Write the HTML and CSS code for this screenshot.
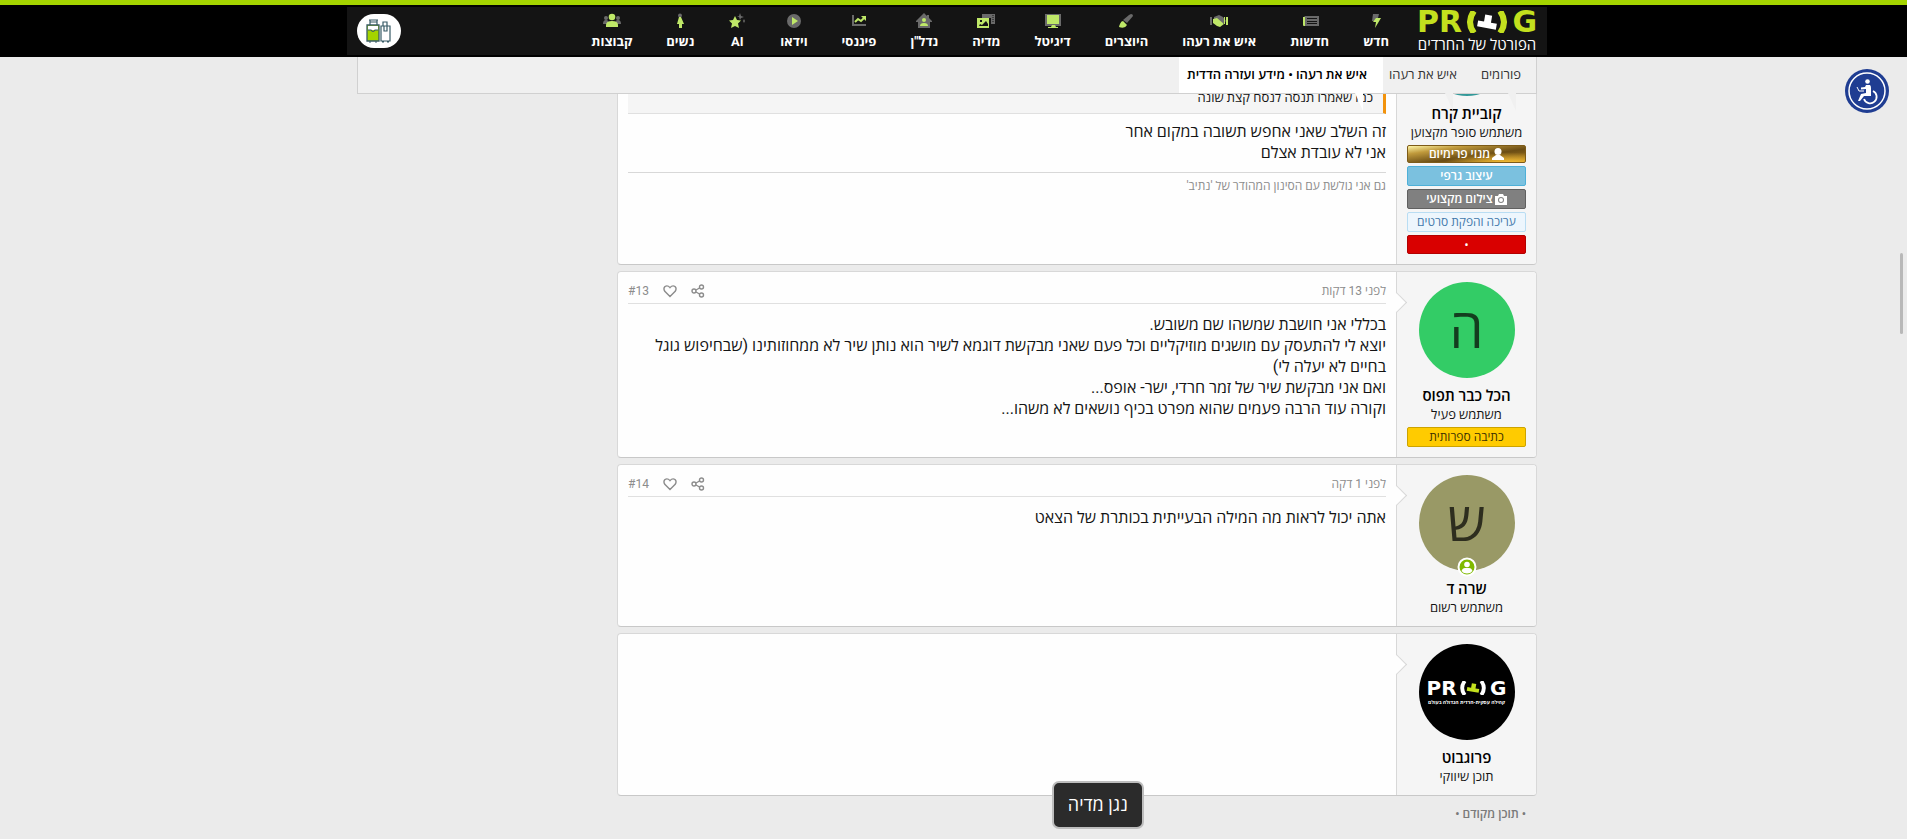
FILE: index.html
```html
<!DOCTYPE html>
<html lang="he" dir="rtl">
<head>
<meta charset="utf-8">
<title>איש את רעהו • מידע ועזרה הדדית</title>
<link rel="stylesheet" href="styles.css">
</head>
<body>
<header class="site-header">
  <div class="header-inner">
    <a class="logo" href="#">
      <span class="logo-word" dir="ltr">
        <span>PR</span>
        <svg class="logo-mark" viewBox="0 0 44 22"><g fill="none" stroke="#c3e01e" stroke-width="6"><path d="M9 0Q1 11 9 22M35 0Q43 11 35 22"/></g><path fill="#fff" transform="rotate(10 22 11)" d="M19 4h7v6h-7zM13 11h6v-1h7v1h6v6H13z"/></svg>
        <span>G</span>
      </span>
      <span class="logo-sub">הפורטל של החרדים</span>
    </a>
    <nav class="main-nav">
      <a href="#"><svg viewBox="0 0 18 16"><path class="g" d="M6 1h6l-1 4-2 3H5z"/><path class="l" d="M9 5h5L8 15l1-6H6z"/></svg>חדש</a>
      <a href="#"><svg viewBox="0 0 18 16"><path class="g" d="M4 3h14v10H3V4z"/><path class="l" d="M2 4h2v9H3q-1 0-1-1z"/><path stroke="#141414" d="M6 5.500h10M6 8.500h10M6 10.500h10"/></svg>חדשות</a>
      <a href="#"><svg viewBox="0 0 18 16"><path class="g" d="M0 4h2v8H0zM4 4l5-2 4 2 3 4-3 3-6-5-3 2z"/><path class="l" d="M3 6l4-1 7 6-4 3-3-1-4-3zM14 4h1v7h-1zM16 4h2v8h-2z"/></svg>איש את רעהו</a>
      <a href="#"><svg viewBox="0 0 18 16"><path class="g" d="M14 1q2 0 2 2l-6 7-4-3 6-5z"/><path class="l" d="M6 8l4 4q-2 4-8 2 0-1 1-3 1-3 3-3z"/></svg>היוצרים</a>
      <a href="#"><svg viewBox="0 0 18 16"><path class="g" d="M1 1h16v12H1z"/><path class="l" d="M3 2h12v9H3zM8 12h3l1 2h2v1H4v-1h3z"/></svg>דיגיטל</a>
      <a href="#"><svg viewBox="0 0 18 16"><path class="g" d="M5 1h13v10h-4V5H5z"/><path stroke="#141414" stroke-dasharray="1 1" d="M16 2v8"/><path class="l" fill-rule="evenodd" d="M0 5h12v10H0zM2 13h9V11L9 8l-4 4-2-1zM3 7v2h2V7z"/></svg>מדיה</a>
      <a href="#"><svg viewBox="0 0 18 16"><path class="g" d="M9 0l3 3V2h2v3l3 3v1h-2v6H3V9H1V8z"/><circle class="l" cx="9" cy="7" r="2"/><path class="l" d="M5 13q0-3 4-3t4 3z"/></svg>נדל"ן</a>
      <a href="#"><svg viewBox="0 0 18 16"><path class="g" d="M2 2h2v9h12v2H2z"/><path fill="none" stroke="#bfe868" stroke-width="2" d="M5 9l3-3 3 2 4-4"/><path class="l" d="M11 3h5v5z"/></svg>פיננסי</a>
      <a href="#"><svg viewBox="0 0 18 16"><circle class="g" cx="9" cy="8" r="7"/><path class="l" d="M7 4l6 4-6 4z"/></svg>וידאו</a>
      <a href="#"><svg viewBox="0 0 18 16"><path class="l" d="M7 3l2 4 4 .5-3 3 1 4.500-4-2-4 2 1-4.500-3-3L5 7z"/><path class="g" d="M12 0l1 3 3 1-3 1-1 2-1-3-2 0 2-1zM16 6l1 2-1 2-1-2z"/></svg>AI</a>
      <a href="#"><svg viewBox="0 0 18 16"><circle class="g" cx="9" cy="2.500" r="2"/><path class="l" d="M8 4h2l3 7h-2v4H8v-4H6z"/></svg>נשים</a>
      <a href="#"><svg viewBox="0 0 18 16"><circle class="g" cx="3" cy="5" r="2"/><circle class="g" cx="15" cy="5" r="2"/><path class="g" d="M0 11q0-4 3-4t3 4zM12 11q0-4 3-4t3 4z"/><circle class="l" cx="9" cy="4" r="3.300"/><path class="l" d="M3 14V12q0-4 6-4t6 4v2z"/></svg>קבוצות</a>
    </nav>
    <a class="luggage" href="#" aria-label="נופש">
      <svg viewBox="0 0 26 26"><path fill="#a4d400" stroke="#385b66" stroke-width="1.300" d="M1 7h12v16H1z"/><path fill="#fff" d="M2 8h10v4H2z"/><path fill="none" stroke="#385b66" stroke-width="1.200" d="M3 2h9M4 2v5M11 2v5M4 4h7M2 12h3q2 3 4 0h3M15 8h9v15h-9zM17 8V4h4v4M18 8h3v5h-3zM3 24h2M9 24h2M16 24h2M21 24h2"/></svg>
    </a>
  </div>
  <nav class="crumbs">
    <a href="#">פורומים</a>
    <a href="#">איש את רעהו</a>
    <a href="#" class="current">איש את רעהו • מידע ועזרה הדדית</a>
  </nav>
</header>

<main class="page">
  <div class="thread">
    <article class="post first">
      <aside class="user">
        <div class="avatar teal"></div>
        <h4 class="name">קוביית קרח</h4>
        <p class="title">משתמש סופר מקצוען</p>
        <ul class="badges">
          <li class="gold"><svg viewBox="0 0 12 12"><circle cx="6" cy="3.500" r="3.500"/><path d="M0 12V10l4-3h4l4 3v2z"/></svg>מנוי פרימיום</li>
          <li class="sky">עיצוב גרפי</li>
          <li class="gray"><svg viewBox="0 0 12 12"><path fill-rule="evenodd" d="M0 3h3l1-2h4l1 2h3v9H0zM6 4a3 3 0 100 6 3 3 0 000-6zm0 1a2 2 0 110 4 2 2 0 010-4z"/></svg>צילום מקצועי</li>
          <li class="pale">עריכה והפקת סרטים</li>
          <li class="red">•</li>
        </ul>
      </aside>
      <div class="content">
        <blockquote class="quote">כמו שאמרו תנסה לנסח קצת שונה</blockquote>
        <div class="text">זה השלב שאני אחפש תשובה במקום אחר<br>אני לא עובדת אצלם</div>
        <div class="signature">גם אני גולשת עם הסינון המהודר של 'נתיב'</div>
      </div>
    </article>

    <article class="post">
      <aside class="user">
        <div class="avatar green">ה</div>
        <h4 class="name">הכל כבר תפוס</h4>
        <p class="title">משתמש פעיל</p>
        <ul class="badges"><li class="yellow">כתיבה ספרותית</li></ul>
      </aside>
      <div class="content">
        <div class="meta">
          <a class="date" href="#">לפני 13 דקות</a>
          <button type="button" aria-label="שיתוף"><svg viewBox="0 0 14 14"><circle cx="10.500" cy="3" r="2"/><circle cx="3" cy="7" r="2"/><circle cx="10.500" cy="11" r="2"/><path d="M5 6l3.500-2M5 8l3.500 2"/></svg></button>
          <button type="button" aria-label="אהבתי"><svg viewBox="0 0 14 14"><path d="M7 12.500L1.800 7.300Q0 4.500 2 2.500 4.500.8 7 3.600 9.500.8 12 2.500 14 4.500 12.200 7.300z"/></svg></button>
          <a href="#" dir="ltr">#13</a>
        </div>
        <div class="text">בכללי אני חושבת שמשהו שם משובש.<br>יוצא לי להתעסק עם מושגים מוזיקליים וכל פעם שאני מבקשת דוגמא לשיר הוא נותן שיר לא ממחוזותינו (שבחיפוש גוגל בחיים לא יעלה לי)<br>ואם אני מבקשת שיר של זמר חרדי, ישר- אופס...<br>וקורה עוד הרבה פעמים שהוא מפרט בכיף נושאים לא משהו...</div>
      </div>
    </article>

    <article class="post">
      <aside class="user">
        <div class="avatar olive">ש<svg class="online" viewBox="0 0 20 20"><circle cx="10" cy="10" r="8.500" fill="#7fb900" stroke="#fff" stroke-width="2"/><circle cx="10" cy="7.500" r="2.800" fill="#fff"/><path fill="#fff" d="M4.500 14q1-3 3.500-3h4q2.500 0 3.500 3-2 2.500-5.500 2.500T4.500 14z"/></svg></div>
        <h4 class="name">שרה ד</h4>
        <p class="title">משתמש רשום</p>
      </aside>
      <div class="content">
        <div class="meta">
          <a class="date" href="#">לפני 1 דקה</a>
          <button type="button" aria-label="שיתוף"><svg viewBox="0 0 14 14"><circle cx="10.500" cy="3" r="2"/><circle cx="3" cy="7" r="2"/><circle cx="10.500" cy="11" r="2"/><path d="M5 6l3.500-2M5 8l3.500 2"/></svg></button>
          <button type="button" aria-label="אהבתי"><svg viewBox="0 0 14 14"><path d="M7 12.500L1.800 7.300Q0 4.500 2 2.500 4.500.8 7 3.600 9.500.8 12 2.500 14 4.500 12.200 7.300z"/></svg></button>
          <a href="#" dir="ltr">#14</a>
        </div>
        <div class="text">אתה יכול לראות מה המילה הבעייתית בכותרת של הצאט</div>
      </div>
    </article>

    <article class="post">
      <aside class="user">
        <div class="avatar black">
          <span class="logo-word small" dir="ltr"><span>PR</span><svg class="logo-mark" viewBox="0 0 44 22"><g fill="none" stroke="#fff" stroke-width="6"><path d="M9 0Q1 11 9 22M35 0Q43 11 35 22"/></g><path fill="#c3e01e" transform="rotate(10 22 11)" d="M19 4h7v6h-7zM13 11h6v-1h7v1h6v6H13z"/></svg><span>G</span></span>
          <span class="tagline">קהילה עסקית-חרדית הגדולה בעולם</span>
        </div>
        <h4 class="name">פרוגבוט</h4>
        <p class="title">תוכן שיווקי</p>
      </aside>
      <div class="content"></div>
    </article>
    <p class="promo">• תוכן מקודם •</p>
  </div>
</main>

<button type="button" class="a11y" aria-label="נגישות">
  <svg viewBox="0 0 44 44"><circle cx="22" cy="22" r="22" fill="#1f3d92"/><circle cx="22" cy="22" r="18" fill="none" stroke="#fff" stroke-width="1.500"/><circle cx="22.500" cy="12.500" r="2.300" fill="#fff"/><path fill="#fff" d="M21 16h4q1 1 1 3v8h-7l-4 5h-2l3-7 5-1v-4l-5 .5v-2l4-.5z"/><path fill="none" stroke="#fff" stroke-width="1.800" d="M28 22a6.500 6.500 0 11-9 8"/><path fill="none" stroke="#fff" d="M12 18l2 4h5"/></svg>
</button>
<button type="button" class="player">נגן מדיה</button>
<div class="scroll-thumb"></div>
</body>
</html>
```
FILE: styles.css
```css
* { box-sizing: border-box; }
body {
  margin: 0;
  padding-right: 13px;
  background: #ebebeb;
  color: #141414;
  font-family: Roboto, "Open Sans", "Liberation Sans", sans-serif;
  font-size: 15px;
  line-height: 21px;
  overflow: hidden;
}
a { color: inherit; text-decoration: none; }
h4, p, ul, blockquote { margin: 0; padding: 0; }
button { border: 0; padding: 0; background: none; color: inherit; font: inherit; cursor: pointer; }
svg { display: block; }

.site-header {
  position: relative;
  z-index: 2;
  margin-right: -13px;
  padding-right: 13px;
  border-top: 5px solid #a4d400;
  background: linear-gradient(#000 52px, transparent 52px);
}
.header-inner {
  display: flex;
  align-items: center;
  max-width: 1200px;
  height: 52px;
  margin: 0 auto;
  padding: 0 10px;
  background: #141414;
  border-top: 2px solid #000;
  border-bottom: 2px solid #000;
}
.logo { display: flex; flex-direction: column; align-items: center; width: 120px; color: #fff; }
.logo-word {
  display: flex;
  align-items: center;
  justify-content: space-between;
  width: 120px;
  height: 28px;
  color: #c3e01e;
  font: bold 30px/28px "DejaVu Sans", sans-serif;
}
.logo-mark { width: 44px; height: 22px; }
.logo-sub { font-size: 15px; line-height: 18px; white-space: nowrap; }
.main-nav { display: flex; gap: 34px; margin-right: 28px; padding-top: 2px; }
.main-nav a {
  display: flex;
  flex-direction: column;
  align-items: center;
  gap: 4px;
  color: #fff;
  font-size: 13px;
  font-weight: 700;
  line-height: 18px;
  white-space: nowrap;
}
.main-nav svg { width: 18px; height: 16px; }
.g { fill: #6a6a6a; }
.l { fill: #bfe868; }
.luggage {
  display: flex;
  align-items: center;
  justify-content: center;
  width: 44px;
  height: 34px;
  margin-right: auto;
  border-radius: 17px;
  background: #fff;
}
.luggage svg { width: 26px; height: 26px; }

.crumbs {
  display: flex;
  max-width: 1180px;
  height: 37px;
  margin: 0 auto;
  padding-right: 10px;
  background: #f0f0f0;
  border: 1px solid #d0d0d0;
  border-top: 0;
  font-size: 13px;
  line-height: 35px;
}
.crumbs a { position: relative; padding: 0 5px 0 18px; color: #333; white-space: nowrap; }
.crumbs a + a { padding: 0 6px; }
.crumbs a.current { padding: 0 16px 0 8px; background: #fff; color: #000; font-weight: 600; }
.crumbs a::after {
  content: "";
  position: absolute;
  top: 36px;
  right: 10px;
  border-left: 8px solid transparent;
  border-top: 18px solid #f0f0f0;
}
.crumbs a.current::after { right: 20px; border-top-color: #fff; }

.page { max-width: 1180px; margin: -105px auto 0; }
.thread { display: flex; flex-direction: column; gap: 6px; margin-left: 260px; }
.post {
  display: flex;
  min-height: 163px;
  background: #fefefe;
  border: 1px solid #d8d8d8;
  border-bottom-color: #c8c8c8;
  border-radius: 4px;
}
.user {
  position: relative;
  flex: 0 0 140px;
  padding: 10px;
  background: #f5f5f5;
  border-left: 1px solid #d8d8d8;
  border-radius: 0 4px 4px 0;
  text-align: center;
}
.user::after {
  content: "";
  position: absolute;
  top: 23px;
  left: -8px;
  width: 14px;
  height: 14px;
  background: linear-gradient(45deg, transparent 50%, #fefefe 50%);
  border-top: 1px solid #d8d8d8;
  border-right: 1px solid #d8d8d8;
  transform: rotate(45deg);
}
.avatar {
  position: relative;
  display: flex;
  flex-direction: column;
  align-items: center;
  justify-content: center;
  width: 96px;
  height: 96px;
  margin: 0 auto 8px;
  border-radius: 50%;
  font-size: 54px;
  line-height: 96px;
}
.teal { background: #339999; }
.green { background: #33cc66; color: #143d1f; }
.olive { background: #999966; color: #2e2e1f; }
.black { background: #000; color: #fff; }
.online { position: absolute; bottom: -6px; left: 38px; width: 20px; height: 20px; }
.small { width: 80px; height: 20px; color: #fff; font-size: 20px; line-height: 20px; }
.small .logo-mark { width: 28px; height: 14px; }
.tagline { font-size: 5px; line-height: 8px; font-weight: 700; white-space: nowrap; }
.name { font-size: 15px; font-weight: 600; line-height: 20px; color: #000; }
.title { font-size: 13px; line-height: 17px; }
.badges { display: flex; flex-direction: column; gap: 3px; margin-top: 4px; list-style: none; }
.badges li {
  display: flex;
  align-items: center;
  justify-content: center;
  gap: 2px;
  height: 20px;
  border: 1px solid;
  border-radius: 2px;
  font-size: 12px;
  line-height: 18px;
  color: #fff;
  white-space: nowrap;
}
.badges svg { width: 12px; height: 12px; fill: #fff; }
.badges .gold { height: 18px; font-weight: 600; border-color: #7d5b18; background: radial-gradient(ellipse at 85% 110%, #ffc536, transparent 45%), linear-gradient(172deg, #fff6a8, #c09a3c 25%, #6b4d14 60%, #a67c22); }
.badges .sky { background: #7bc1df; border-color: #4eb0d8; font-weight: 600; }
.badges .gray { background: #808080; border-color: #606060; font-weight: 600; }
.badges .pale { background: #edf6fd; border-color: #b9ddf3; color: #4479ab; }
.badges .red { height: 19px; background: #d90000; border-color: #b30000; }
.badges .yellow { background: #ffcb00; border-color: #cca300; color: #3d3100; }

.content { flex: 1; min-width: 0; padding: 10px; }
.text { font-size: 16px; }
.meta {
  display: flex;
  align-items: center;
  gap: 14px;
  height: 22px;
  margin-bottom: 10px;
  border-bottom: 1px solid #e0e0e0;
  padding-bottom: 4px;
  color: #8c8c8c;
  font-size: 12px;
  line-height: 18px;
}
.meta .date { margin-left: auto; }
.meta svg { width: 14px; height: 14px; fill: none; stroke: #8c8c8c; stroke-width: 1.4; }
.quote {
  margin-bottom: 7px;
  padding: 91px 10px 8px;
  background: #f5f5f5;
  border-right: 3px solid #f2930d;
  border-bottom: 1px solid #e0e0e0;
  font-size: 13px;
  line-height: 14px;
}
.signature {
  margin-top: 9px;
  padding-top: 4px;
  border-top: 1px solid #d8d8d8;
  color: #8c8c8c;
  font-size: 12px;
  line-height: 18px;
}
.first .user::after { display: none; }
.promo { margin-top: 3px; padding-right: 11px; color: #7a7a7a; font-size: 12px; font-weight: 600; line-height: 18px; }

.a11y { position: fixed; top: 69px; right: 18px; width: 44px; height: 44px; z-index: 3; }
.player {
  position: fixed;
  bottom: 10px;
  left: 55%;
  z-index: 3;
  margin: 0 3px;
  padding: 8px 14px;
  border: 2px solid #bdbdbd;
  border-radius: 7px;
  background: #2b2b2b;
  color: #fff;
  font-size: 18px;
  line-height: 28px;
}
.scroll-thumb { position: fixed; top: 253px; right: 4px; z-index: 3; width: 3px; height: 81px; border-radius: 2px; background: #b8b8b8; }
```
